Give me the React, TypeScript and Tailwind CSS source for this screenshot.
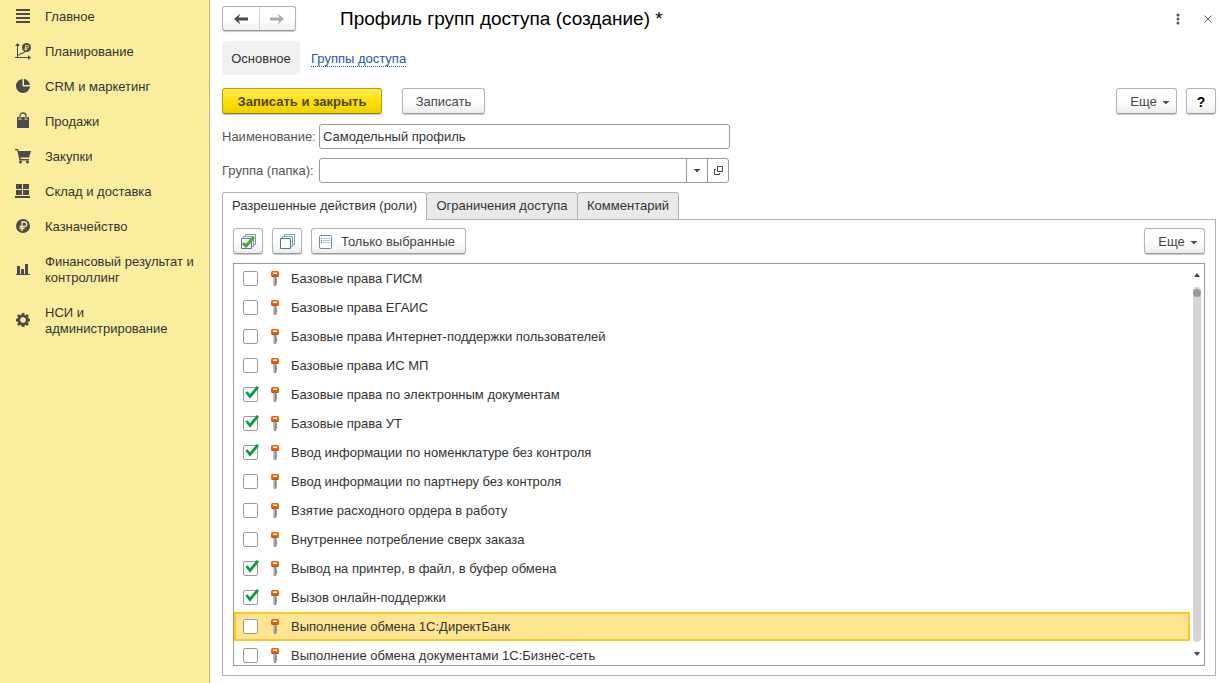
import { useState, type ReactNode } from "react";

const ink = "#4a4a4a";

function Glyph({ children }: { children: ReactNode }) {
  return (
    <svg width="16" height="16" viewBox="0 1 16 16" fill={ink} className="shrink-0 overflow-visible" aria-hidden="true">
      {children}
    </svg>
  );
}

const sections: { title: string; icon: ReactNode }[] = [
  { title: "Главное", icon: <path d="M1 1h14v2H1zM1 5h14v2H1zM1 9h14v2H1zM1 13h14v2H1z" /> },
  {
    title: "Планирование",
    icon: (
      <>
        <path d="M2 2h1v12H2zM0 14h14v1H0zM2.500 0 5 3H0zM16 14.500 13 17v-5zM3 12l3-2 2-.5L11 7l.6.8L8.500 10.400l-2 .6L3 13z" />
        <circle cx="11.500" cy="4.500" r="4.500" />
        <path d="M10.700 7.500V2.400h1.500a1.200 1.200 0 0 1 0 2.600H9.600M9.600 6.400h2.600" fill="none" stroke="#fbed9e" strokeWidth=".9" />
      </>
    ),
  },
  {
    title: "CRM и маркетинг",
    icon: <path d="M7.500 1v7.500H15A7 7 0 1 1 7.500 1zM9 1a6.500 6.500 0 0 1 6 6H9z" />,
  },
  {
    title: "Продажи",
    icon: (
      <>
        <path d="M2 4h12v11H2z" />
        <path d="M5 7V3a3 3 0 0 1 6 0v4" fill="none" stroke="#fbed9e" strokeWidth="2.400" />
        <path d="M5 6.500V3a3 3 0 0 1 6 0v3.500" fill="none" stroke={ink} strokeWidth="1.300" />
      </>
    ),
  },
  {
    title: "Закупки",
    icon: (
      <>
        <path d="M0 1h3l.8 2H16l-2 6.500H5.400l.3 1.500H14v1.500H4.500L2.200 2.300H0z" />
        <circle cx="5.500" cy="14" r="1.500" />
        <circle cx="12.500" cy="14" r="1.500" />
      </>
    ),
  },
  { title: "Склад и доставка", icon: <path d="M1 1h6v5H1zM8 1h6v5H8zM1 7h6v5H1zM8 7h6v5H8zM0 13h15v2H0z" /> },
  {
    title: "Казначейство",
    icon: (
      <>
        <circle cx="8" cy="8" r="7" />
        <path d="M7 13V4h2.500a2 2 0 0 1 0 4.500H4.500M4.500 10.500h5" fill="none" stroke="#fbed9e" strokeWidth="1.300" />
      </>
    ),
  },
  { title: "Финансовый результат и контроллинг", icon: <path d="M2 5h3v8H2zM6 8h3v5H6zM10 3h3v10h-3zM1 13h14v1H1z" /> },
  {
    title: "НСИ и администрирование",
    icon: (
      <>
        <circle cx="8" cy="8" r="4" fill="none" stroke={ink} strokeWidth="3" />
        <path
          d="M8 1v3M8 12v3M1 8h3M12 8h3M3 3l2.200 2.200M10.800 10.800 13 13M13 3l-2.200 2.200M5.200 10.800 3 13"
          stroke={ink}
          strokeWidth="2.800"
        />
        <circle cx="8" cy="8" r="2.700" fill="#fbed9e" />
      </>
    ),
  },
];

const initialRoles: [string, boolean][] = [
  ["Базовые права ГИСМ", false],
  ["Базовые права ЕГАИС", false],
  ["Базовые права Интернет-поддержки пользователей", false],
  ["Базовые права ИС МП", false],
  ["Базовые права по электронным документам", true],
  ["Базовые права УТ", true],
  ["Ввод информации по номенклатуре без контроля", true],
  ["Ввод информации по партнеру без контроля", false],
  ["Взятие расходного ордера в работу", false],
  ["Внутреннее потребление сверх заказа", false],
  ["Вывод на принтер, в файл, в буфер обмена", true],
  ["Вызов онлайн-поддержки", true],
  ["Выполнение обмена 1С:ДиректБанк", false],
  ["Выполнение обмена документами 1С:Бизнес-сеть", false],
];

const buttonLook =
  "flex h-[26px] items-center rounded-[3px] border border-[#b3b3b3] border-b-[#999] bg-linear-to-b from-white from-50% to-[#ececec] pt-[2px] text-[#444] shadow-[0_1px_1px_#c8c8c8]";

function Caret() {
  return (
    <svg width="6" height="3" viewBox="0 0 6 3" fill="#444" aria-hidden="true">
      <path d="M0 0h6v1H5L3.500 3h-1L1 1H0z" />
    </svg>
  );
}

function MoreButton() {
  return (
    <button type="button" className={`${buttonLook} w-[61px] justify-center gap-[6px] pl-[6px]`}>
      <span>Еще</span>
      <Caret />
    </button>
  );
}

function StackIcon({ checked = false }: { checked?: boolean }) {
  return (
    <svg width="16" height="16" viewBox="0 0 16 16" fill="#fff" stroke="#55788d" aria-hidden="true">
      <path d="M5.500.5h10v10h-10z" stroke="#7f9bac" />
      <path d="M3.500 2.500h10v10h-10z" stroke="#7f9bac" />
      <path d="M1.500 4.500h10v10h-10z" />
      {checked && <path d="M3 9 6 12 14 3" fill="none" stroke="#4aa52a" strokeWidth="3" />}
    </svg>
  );
}

function KeyIcon() {
  return (
    <svg width="8" height="15" viewBox="0 0 8 15" className="shrink-0" aria-hidden="true">
      <path d="M2.500 5h3v9L4.500 15h-1l-1-1z" fill="#858585" />
      <path d="M3 6h1v8H3z" fill="#b5b5b5" />
      <path d="M5 8h1v1H5zM5 10h1v2H5z" fill="#858585" />
      <rect x="0" y="0" width="8" height="6" rx="1.500" fill="#e4660f" />
      <path d="M2 1.500h4V3H2z" fill="#fff" />
      <path d="M1 4.500h6V6H1z" fill="#cf5206" />
    </svg>
  );
}

function UpDown({ down = false }: { down?: boolean }) {
  return (
    <svg width="6" height="4" viewBox="0 0 6 4" fill="#444" aria-hidden="true">
      <path d={down ? "M0 0h6L3 4z" : "M0 4h6L3 0z"} />
    </svg>
  );
}

export default function App() {
  const [roles, setRoles] = useState(initialRoles);
  const [selected, setSelected] = useState(12);

  const toggle = (index: number) => {
    setSelected(index);
    setRoles(roles.map(([name, on], i) => [name, i === index ? !on : on]));
  };

  return (
    <div className="flex h-screen bg-white font-['Liberation_Sans',Arial,sans-serif] text-[13px] leading-4 text-[#333]">
      <nav className="w-[210px] shrink-0 border-r border-[#c3b878] bg-[#fbed9e] pt-[9px] pr-2 pl-[15px]">
        <ul className="flex flex-col gap-[19px]">
          {sections.map(({ title, icon }) => (
            <li key={title}>
              <a href="#" className="flex items-center gap-[14px]">
                <Glyph>{icon}</Glyph>
                <span>{title}</span>
              </a>
            </li>
          ))}
        </ul>
      </nav>

      <main className="flex min-w-0 flex-1 flex-col pt-[6px] pr-[7px] pb-[7px] pl-3">
        <header className="flex h-[25px] items-center">
          <div className="flex h-[25px] w-[74px] rounded-[3px] border border-[#b3b3b3] border-b-[#999] bg-linear-to-b from-white from-50% to-[#f2f2f2] shadow-[0_1px_1px_#c8c8c8]">
            <button type="button" aria-label="Назад" className="flex flex-1 items-center justify-center border-r border-[#d0d0d0]">
              <svg width="14" height="10" viewBox="0 0 14 10" fill={ink} aria-hidden="true">
                <path d="M0 5 6 0v1L4.500 3.500H14v3H4.500L6 9v1z" />
              </svg>
            </button>
            <button type="button" aria-label="Вперед" className="flex flex-1 items-center justify-center">
              <svg width="14" height="10" viewBox="0 0 14 10" fill="#aaa" aria-hidden="true">
                <path d="M14 5 8 0v1l1.500 2.500H0v3h9.500L8 9v1z" />
              </svg>
            </button>
          </div>
          <h1 className="ml-11 flex-1 text-[19px] leading-6 text-black">Профиль групп доступа (создание) *</h1>
          <button type="button" aria-label="Меню" className="flex size-4 items-center justify-center">
            <svg width="4" height="12" viewBox="0 0 4 12" fill="#555" aria-hidden="true">
              <circle cx="2" cy="2" r="1.500" />
              <circle cx="2" cy="6" r="1.500" />
              <circle cx="2" cy="10" r="1.500" />
            </svg>
          </button>
          <button type="button" aria-label="Закрыть" className="ml-[14px] flex size-4 items-center justify-center">
            <svg width="8" height="8" viewBox="0 0 8 8" stroke="#555" aria-hidden="true">
              <path d="M.5.5l7 7M7.500.5l-7 7" />
            </svg>
          </button>
        </header>

        <div className="mt-[10px] flex h-[34px] items-center gap-[11px]">
          <a href="#" className="flex h-full w-[78px] items-center justify-center rounded-[4px] bg-[#f1f1f1] pt-[2px]">
            Основное
          </a>
          <a href="#" className="mt-[2px] border-b border-dotted border-[#2255bb] leading-[14px] text-[#2255bb]">
            Группы доступа
          </a>
        </div>

        <div className="mt-[13px] flex">
          <button
            type="button"
            className="h-[26px] w-40 rounded-[3px] border border-[#b59e10] border-b-[#94810b] bg-linear-to-b from-[#ffe94d] via-[#ffe000] to-[#f0cf00] pt-[2px] font-bold text-[#4a4520] shadow-[0_1px_1px_#c8c8c8]"
          >
            Записать и закрыть
          </button>
          <button type="button" className={`${buttonLook} ml-5 w-[83px] justify-center`}>
            Записать
          </button>
          <div className="ml-auto flex gap-[9px]">
            <MoreButton />
            <button type="button" aria-label="Справка" className={`${buttonLook} w-[30px] justify-center text-[14px] font-bold text-black`}>
              ?
            </button>
          </div>
        </div>

        <div className="mt-[10px] grid grid-cols-[97px_411px] gap-y-[9px]">
          <label htmlFor="name" className="self-center text-[#555]">
            Наименование:
          </label>
          <input
            id="name"
            defaultValue="Самодельный профиль"
            className="h-[25px] w-full rounded-[3px] border border-[#999] px-[3px] outline-none"
          />
          <label htmlFor="folder" className="self-center text-[#555]">
            Группа (папка):
          </label>
          <div className="mr-px flex h-[25px] rounded-[3px] border border-[#999]">
            <input id="folder" className="min-w-0 flex-1 px-[3px] outline-none" />
            <button type="button" aria-label="Выбрать" className="flex w-[21px] items-center justify-center border-l border-[#999]">
              <Caret />
            </button>
            <button type="button" aria-label="Открыть" className="flex w-[21px] items-center justify-center border-l border-[#999]">
              <svg width="9" height="9" viewBox="0 0 9 9" fill="none" stroke="#444" aria-hidden="true">
                <path d="M3.500.5h5v5h-5zM2 3.500H.5v5h5V7" />
              </svg>
            </button>
          </div>
        </div>

        <div className="mt-[9px] flex h-7" role="tablist">
          <button
            type="button"
            role="tab"
            aria-selected="true"
            className="z-10 w-[205px] rounded-t-[3px] border border-b-0 border-[#b0b0b0] bg-white pb-px"
          >
            Разрешенные действия (роли)
          </button>
          <button type="button" role="tab" aria-selected="false" className="-ml-px w-[152px] rounded-t-[3px] border border-[#b0b0b0] bg-[#e9e9e9]">
            Ограничения доступа
          </button>
          <button type="button" role="tab" aria-selected="false" className="-ml-px w-[102px] rounded-t-[3px] border border-[#b0b0b0] bg-[#e9e9e9]">
            Комментарий
          </button>
        </div>

        <section className="-mt-px flex min-h-0 flex-1 flex-col border border-[#b0b0b0] px-[10px] pt-2 pb-[9px]">
          <div className="flex gap-[9px]">
            <button type="button" aria-label="Отметить все" className={`${buttonLook} w-[30px] justify-center`}>
              <StackIcon checked />
            </button>
            <button type="button" aria-label="Снять отметки" className={`${buttonLook} w-[30px] justify-center`}>
              <StackIcon />
            </button>
            <button type="button" className={`${buttonLook} w-[155px] gap-[9px] pl-[7px]`}>
              <svg width="13" height="14" viewBox="0 0 13 14" fill="none" aria-hidden="true">
                <rect x=".5" y=".5" width="12" height="13" rx="1" fill="#fff" stroke="#6f8c9f" />
                <path d="M2 3.500h1M2 5.500h1M2 7.500h1" stroke="#4d86ad" />
                <path d="M4 3.500h7M4 5.500h7M4 7.500h7" stroke="#a9cbe0" />
              </svg>
              <span>Только выбранные</span>
            </button>
            <div className="ml-auto">
              <MoreButton />
            </div>
          </div>

          <div className="mt-[9px] flex min-h-0 flex-1 border border-[#999]">
            <ul className="min-w-0 flex-1 overflow-hidden">
              {roles.map(([name, on], i) => (
                <li key={name}>
                  <label
                    className={`flex h-[29px] items-center border-2 pl-[7px] ${
                      i === selected ? "border-[#fcc91f] bg-[#ffe591]" : "border-transparent"
                    }`}
                  >
                    <span className="relative flex">
                      <input
                        type="checkbox"
                        checked={on}
                        onChange={() => toggle(i)}
                        className="size-[15px] appearance-none rounded-[2px] border border-[#999] bg-white"
                      />
                      {on && (
                        <svg width="16" height="14" viewBox="0 0 16 14" className="pointer-events-none absolute -top-px left-px" aria-hidden="true">
                          <path d="M2.500 6 6 10.500 14 .8" fill="none" stroke="#0b9a4a" strokeWidth="2.800" />
                        </svg>
                      )}
                    </span>
                    <span className="mr-3 ml-[13px] flex">
                      <KeyIcon />
                    </span>
                    {name}
                  </label>
                </li>
              ))}
            </ul>
            <div className="flex w-[14px] flex-col items-center pt-[9px] pb-[9px]" aria-hidden="true">
              <UpDown />
              <div className="my-[10px] w-2 flex-1 rounded-full bg-[#d5d5d5] pt-[2px]">
                <div className="size-2 rounded-full bg-[#999]" />
              </div>
              <UpDown down />
            </div>
          </div>
        </section>
      </main>
    </div>
  );
}
